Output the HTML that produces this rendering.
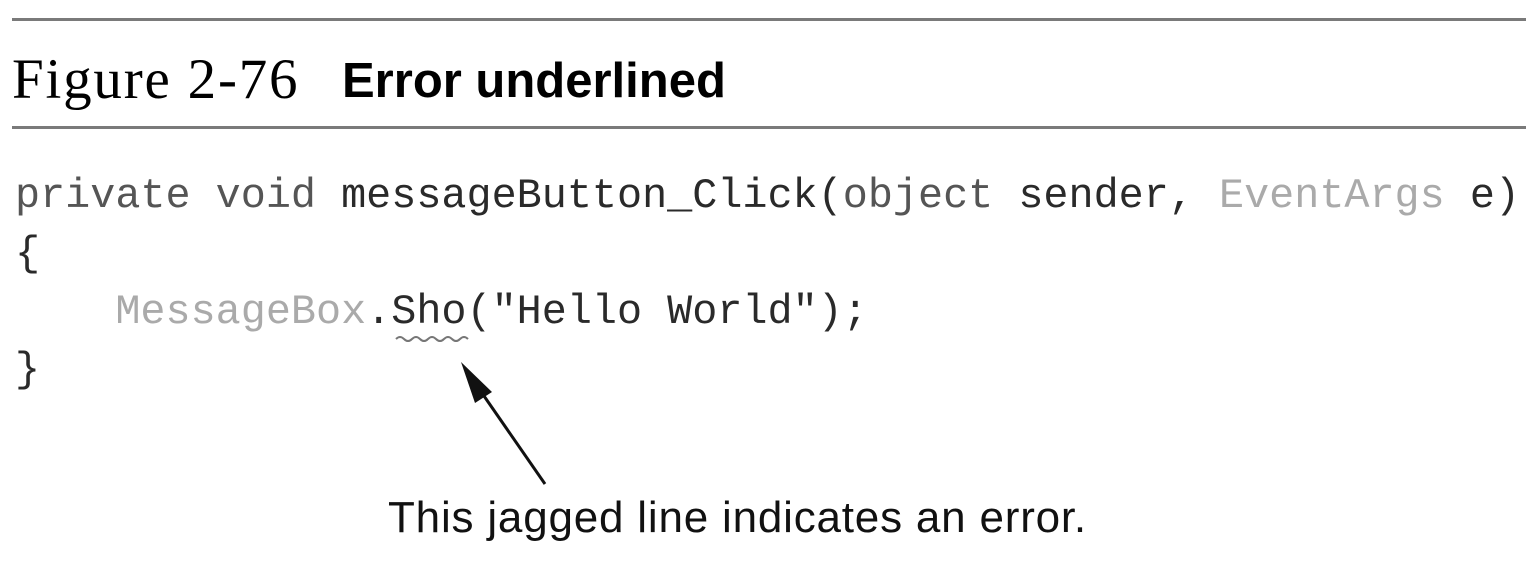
<!DOCTYPE html>
<html><head><style>
body{margin:0;width:1526px;height:572px;background:#fff;position:relative;overflow:hidden}
.rule{position:absolute;left:12px;right:0;height:3px;background:#7a7a7a}
.t{position:absolute;white-space:pre}
.code{font-family:"Liberation Mono",monospace;font-size:41.8px;color:#2a2a2a;left:15px}
.k{color:#555}.g{color:#aaa}
</style></head><body>
<div class="rule" style="top:18px"></div>
<div class="rule" style="top:126px"></div>
<div class="t" style="left:12px;top:47px;font-family:'Liberation Serif',serif;font-size:57px;line-height:66px;letter-spacing:1.8px;color:#000">Figure 2-76</div>
<div class="t" style="left:342px;top:52px;font-family:'Liberation Sans',sans-serif;font-weight:bold;font-size:49px;line-height:58px;color:#000">Error underlined</div>
<div class="t code" style="top:172px"><span class="k">private void</span> messageButton_Click(<span class="k">object</span> sender, <span class="g">EventArgs</span> e)</div>
<div class="t code" style="top:230px">{</div>
<div class="t code" style="top:288px">    <span class="g">MessageBox</span>.Sho("Hello World");</div>
<div class="t code" style="top:346px">}</div>
<svg width="1526" height="572" style="position:absolute;left:0;top:0">
<path d="M396 339 q4 -4 8 0 t8 0 t8 0 t8 0 t8 0 t8 0 t8 0 t8 0 t8 0" fill="none" stroke="#777" stroke-width="2"/>
<line x1="545" y1="484" x2="475" y2="383" stroke="#111" stroke-width="3"/>
<polygon points="461,362 492,392 475,403" fill="#111"/>
</svg>
<div class="t" style="left:388px;top:492px;font-family:'Liberation Sans',sans-serif;font-size:44px;line-height:52px;letter-spacing:0.8px;color:#111">This jagged line indicates an error.</div>
</body></html>
